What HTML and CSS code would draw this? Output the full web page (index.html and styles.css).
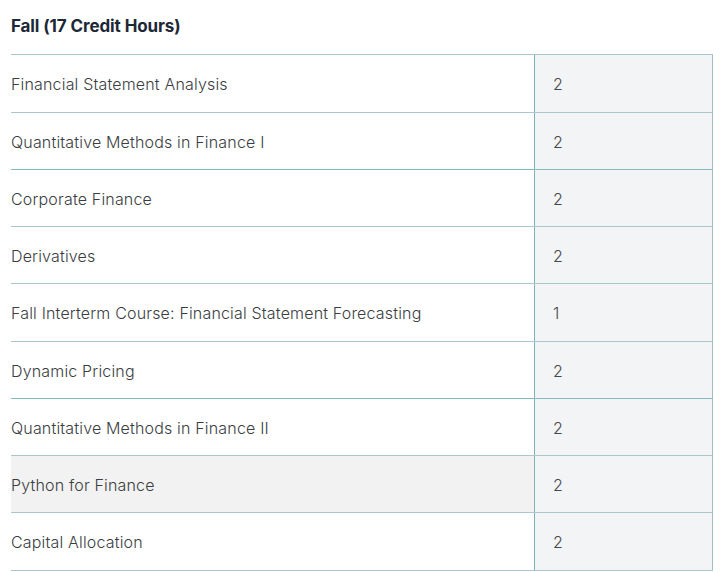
FILE: index.html
```html
<!DOCTYPE html>
<html>
<head>
<meta charset="utf-8">
<link rel="stylesheet" href="styles.css">
</head>
<body>
<h3 class="title">Fall (17 Credit Hours)</h3>
<div class="table">
  <div class="row"><div class="course">Financial Statement Analysis</div><div class="credits">2</div></div>
  <div class="row"><div class="course">Quantitative Methods in Finance I</div><div class="credits">2</div></div>
  <div class="row strong"><div class="course">Corporate Finance</div><div class="credits">2</div></div>
  <div class="row"><div class="course">Derivatives</div><div class="credits">2</div></div>
  <div class="row"><div class="course">Fall Interterm Course: Financial Statement Forecasting</div><div class="credits">1</div></div>
  <div class="row"><div class="course">Dynamic Pricing</div><div class="credits">2</div></div>
  <div class="row strong"><div class="course">Quantitative Methods in Finance II</div><div class="credits">2</div></div>
  <div class="row shaded"><div class="course">Python for Finance</div><div class="credits">2</div></div>
  <div class="row"><div class="course">Capital Allocation</div><div class="credits">2</div></div>
</div>
</body>
</html>
```
FILE: styles.css
```css
html, body {
  margin: 0;
  padding: 0;
  background: #ffffff;
}
body {
  padding: 0 7px 0 11px;
  font-family: Inter, "Liberation Sans", sans-serif;
  color: #3a3d42;
}
.title {
  margin: 0;
  height: 54px;
  display: flex;
  align-items: center;
  padding-bottom: 2px;
  box-sizing: border-box;
  font-size: 17px;
  font-weight: 700;
  color: #1d2836;
  letter-spacing: -0.1px;
}
.table {
  width: 702px;
  border-top: 1px solid #a8c8cd;
}
.row {
  display: grid;
  grid-template-columns: 523px 1fr;
  height: 57.5px;
  box-sizing: border-box;
  border-bottom: 1px solid #a8c8cd;
}
.row.strong {
  border-top: 1px solid #85b9c0;
  margin-top: -1px;
}
.row.shaded .course {
  background: #f2f2f2;
}
.course {
  display: flex;
  align-items: center;
  padding-top: 2px;
  font-size: 16px;
  font-weight: 300;
  letter-spacing: 0.17px;
}
.credits {
  display: flex;
  align-items: center;
  padding-top: 2px;
  padding-left: 18px;
  background: #f3f4f5;
  border-left: 1px solid #7fb3bb;
  border-right: 1px solid #9fbfc4;
  font-size: 16px;
  font-weight: 300;
  color: #44474c;
}
```
